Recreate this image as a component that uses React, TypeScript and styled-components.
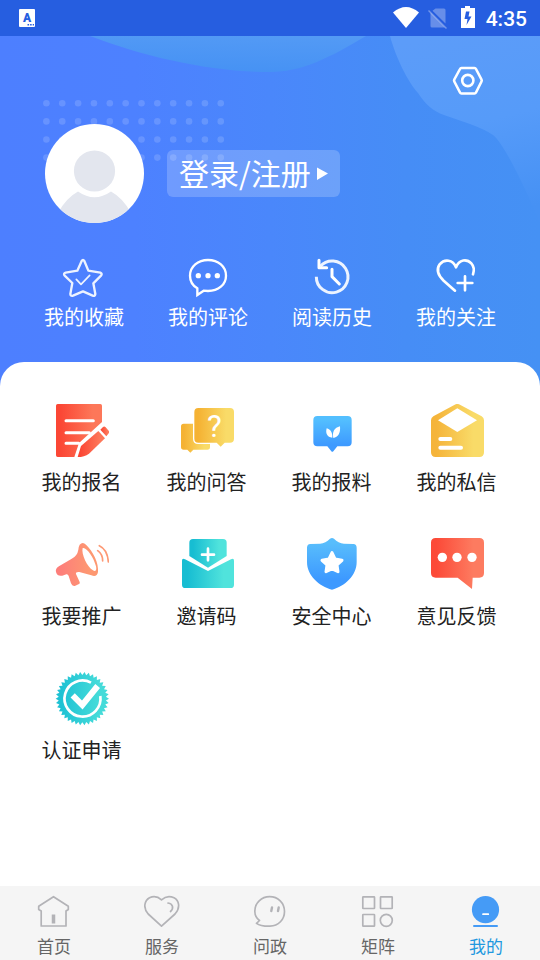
import React from "react";
import styled, { createGlobalStyle } from "styled-components";

const GlobalStyle = createGlobalStyle`
  * { box-sizing: border-box; }
  body {
    margin: 0;
    background: #fff;
    font-family: "Noto Sans CJK SC", "Noto Sans", sans-serif;
  }
  button {
    margin: 0;
    padding: 0;
    border: 0;
    background: none;
    color: inherit;
    font: inherit;
    cursor: pointer;
  }
  a { color: inherit; text-decoration: none; }
  svg { display: block; flex: none; }
`;

const Page = styled.div`
  display: flex;
  flex-direction: column;
  min-height: 100vh;
`;

const StatusBar = styled.div`
  display: flex;
  align-items: center;
  height: 36px;
  padding: 0 13px 0 19px;
  background: #265ee0;
  color: #fff;
`;

const StatusIcons = styled.div`
  display: flex;
  align-items: center;
  gap: 9px;
  margin-left: auto;
`;

const Clock = styled.time`
  font: 500 21px/24px Roboto, sans-serif;
  padding-top: 2px;
`;

const Header = styled.header`
  position: relative;
  padding: 28px 22px 57px;
  background: linear-gradient(90deg, #4d7fff 0%, #4d81ff 25%, #4a87fb 50%, #468df6 75%, #4591f4 100%);
  color: #fff;
`;

const Backdrop = styled.svg`
  position: absolute;
  inset: 0;
  width: 100%;
  height: 100%;
`;

const Toolbar = styled.div`
  position: relative;
  display: flex;
  justify-content: flex-end;
  padding-right: 34px;
`;

const Profile = styled.div`
  position: relative;
  display: flex;
  align-items: center;
  gap: 23px;
  margin-top: 28px;
  padding-left: 23px;
`;

const LoginButton = styled.button`
  display: flex;
  align-items: center;
  gap: 6px;
  height: 47px;
  padding: 0 12px;
  border-radius: 6px;
  background: rgba(255, 255, 255, 0.2);
  font-size: 30px;
  line-height: 44px;
`;

const LoginText = styled.span`
  padding-bottom: 3px;
`;

const QuickList = styled.nav`
  position: relative;
  display: grid;
  grid-template-columns: repeat(4, 1fr);
  margin-top: 35px;
`;

const QuickLink = styled.a`
  display: flex;
  flex-direction: column;
  align-items: center;
  gap: 7px;
  font-size: 20px;
  line-height: 24px;
`;

const Sheet = styled.main`
  position: relative;
  flex: 1;
  margin-top: -24px;
  padding: 42px 21px 42px 19px;
  border-radius: 24px 24px 0 0;
  background: #fff;
`;

const ServiceGrid = styled.div`
  display: grid;
  grid-template-columns: repeat(4, 1fr);
  row-gap: 44px;
`;

const ServiceLink = styled.a`
  display: flex;
  flex-direction: column;
  align-items: center;
  gap: 12px;
  color: #222;
  font-size: 20px;
  line-height: 24px;
`;

const TabBar = styled.nav`
  display: grid;
  grid-template-columns: repeat(5, 1fr);
  height: 74px;
  padding-top: 8px;
  background: #f5f5f5;
`;

const Tab = styled.a<{ $active?: boolean }>`
  display: flex;
  flex-direction: column;
  align-items: center;
  gap: 6px;
  color: ${(p) => (p.$active ? "#2298df" : "#666")};
  font-size: 17px;
  line-height: 20px;
`;

const LineIcon = styled.svg`
  overflow: visible;
  fill: none;
  stroke: #fff;
  stroke-width: 7;
  stroke-linecap: round;
  stroke-linejoin: round;
`;

const TabIcon = styled.svg`
  fill: none;
  stroke: #b3b3b7;
  stroke-width: 1.7;
  stroke-linecap: round;
  stroke-linejoin: round;
`;

function HeaderBackdrop() {
  const dots = [];
  for (let row = 0; row < 4; row++) {
    for (let col = 0; col < 12; col++) {
      dots.push(<circle key={`${row}-${col}`} cx={46.4 + col * 15.85} cy={67.3 + row * 18.1} r="3.3" />);
    }
  }
  return (
    <Backdrop viewBox="0 0 540 350" preserveAspectRatio="xMidYMin slice" aria-hidden="true">
      <defs>
        <linearGradient id="wave" x1="0.55" y1="1" x2="0.75" y2="0">
          <stop offset="0" stopColor="#4692f4" />
          <stop offset="1" stopColor="#539af5" />
        </linearGradient>
        <linearGradient id="cloud" x1="0.3" y1="0" x2="0.5" y2="1">
          <stop offset="0" stopColor="#5c9cf9" />
          <stop offset="0.5" stopColor="#569bf9" />
          <stop offset="1" stopColor="#4691f4" />
        </linearGradient>
      </defs>
      <path d="M90 0C145 21 210 36 270 36C302 36 331 21 366 0Z" fill="url(#wave)" />
      <path d="M390 0C396 22 408 46 418 57C426 69 433 75 444 79L470 88Q486 94 493 99C503 107 517 137 524 151Q533 170 540 187V0Z" fill="url(#cloud)" />
      <g fill="#fff" fillOpacity="0.15">{dots}</g>
    </Backdrop>
  );
}

const quickItems = [
  {
    label: "我的收藏",
    icon: (
      <LineIcon width="40" height="40" viewBox="192 54 120 120" strokeOpacity="0.9">
        <path d="M245 63Q249 57 253 63L265 92L301 98Q308 101 303 107L280 130L286 162Q285 170 278 167L249 154L219 167Q211 169 211 162L217 129L194 107Q189 100 197 98L232 92Z" />
        <path d="M229 118L243 133L269 106" strokeWidth="5" />
      </LineIcon>
    ),
  },
  {
    label: "我的评论",
    icon: (
      <LineIcon width="40" height="40" viewBox="564 54 120 120">
        <path d="M592 165V145C577 136 570 122 570 107C570 80 594 60 624 60C655 60 678 80 678 107C678 134 655 153 624 153L611 152Z" strokeLinejoin="miter" />
        <g fill="#fff" stroke="none">
          <circle cx="595" cy="107" r="8" />
          <circle cx="624" cy="107" r="8" />
          <circle cx="652" cy="107" r="8" />
        </g>
      </LineIcon>
    ),
  },
  {
    label: "阅读历史",
    icon: (
      <LineIcon width="40" height="40" viewBox="126 54 120 120">
        <g strokeWidth="9">
          <path d="M139 110A47.500 47.500 0 1 0 151 79" strokeOpacity="0.9" strokeLinecap="butt" />
          <path d="M147 61V83H170M186 88V110L208 132" />
        </g>
      </LineIcon>
    ),
  },
  {
    label: "我的关注",
    icon: (
      <LineIcon width="40" height="40" viewBox="498 54 120 120">
        <g strokeWidth="8">
          <path d="M555 152L521 122C503 105 499 88 509 73C523 56 549 58 558 82C567 57 591 56 604 70C612 79 613 91 609 103" />
          <path d="M585 109V151M563 129H607" />
        </g>
      </LineIcon>
    ),
  },
];

function ServiceIcon({
  origin,
  id,
  from,
  to,
  vertical,
  children,
}: {
  origin: string;
  id: string;
  from: string;
  to: string;
  vertical?: boolean;
  children: React.ReactNode;
}) {
  return (
    <svg width="54" height="54" viewBox={`${origin} 162 162`} fill={`url(#${id})`} aria-hidden="true">
      <defs>
        <linearGradient id={id} x1="0" y1="0" x2={vertical ? "0" : "1"} y2={vertical ? "1" : "0"}>
          <stop offset="0.1" stopColor={from} />
          <stop offset="0.8" stopColor={to} />
        </linearGradient>
      </defs>
      {children}
    </svg>
  );
}

const badgeTeeth = Array.from({ length: 76 }, (_, i) => {
  const angle = (i * Math.PI) / 38;
  const radius = i % 2 ? 71 : 80;
  return `${247 + radius * Math.cos(angle)},${116 + radius * Math.sin(angle)}`;
}).join(" ");

const services = [
  {
    label: "我的报名",
    icon: (
      <ServiceIcon origin="165 42" id="form" from="#fb4735" to="#fd7759">
        <path d="M168 47Q168 42 173 42H301Q306 42 306 47V96L237 159L223 201H173Q168 201 168 196Z" />
        <path d="M198 92H280M198 128H268M198 160H236" stroke="#fff" strokeWidth="9" strokeLinecap="round" />
        <path d="M295 123L243 168L233 201Q253 201 267 191L315 145Z" />
        <path d="M301 119L309 111Q313 108 317 112L326 122Q329 127 325 131L319 139Z" />
      </ServiceIcon>
    ),
  },
  {
    label: "我的问答",
    icon: (
      <ServiceIcon origin="540 42" id="answer" from="#f5b233" to="#f9db68">
        <path d="M551 101H622Q630 101 630 109V171Q630 179 622 179H580L571 188L562 179H551Q543 179 543 171V109Q543 101 551 101Z" />
        <path d="M595 54H690Q702 54 702 66V146Q702 158 690 158H674L662 170L650 158H595Q583 158 583 146V66Q583 54 595 54Z" stroke="#fff" strokeWidth="8" paintOrder="stroke" />
        <text x="643" y="142" fill="#fff" fontFamily="Roboto, sans-serif" fontSize="94" textAnchor="middle">?</text>
      </ServiceIcon>
    ),
  },
  {
    label: "我的报料",
    icon: (
      <ServiceIcon origin="105 42" id="report" from="#53bfff" to="#3e9aff" vertical>
        <path d="M142 78H233Q245 78 245 90V157Q245 169 233 169H202L190 184Q187 187 184 184L172 169H142Q130 169 130 157V90Q130 78 142 78Z" />
        <path d="M187 143C171 142 166 129 170 115C182 118 188 128 187 143ZM190 144C186 126 193 113 210 109C212 130 204 142 190 144Z" fill="#fff" />
      </ServiceIcon>
    ),
  },
  {
    label: "我的私信",
    icon: (
      <ServiceIcon origin="480 42" id="letter" from="#f5b43a" to="#f9db68">
        <path d="M483 91Q483 83 490 79L557 43Q562 40 567 43L635 79Q642 83 642 91V187Q642 201 628 201H497Q483 201 483 187Z" />
        <path d="M562 55L621 91L562 126L504 91Z" fill="#fff" />
        <path d="M511 147H541M511 173H573" stroke="#fff" strokeWidth="12" strokeLinecap="round" />
      </ServiceIcon>
    ),
  },
  {
    label: "我要推广",
    icon: (
      <ServiceIcon origin="165 54" id="promote" from="#fd7e7a" to="#fd9871">
        <path fillRule="evenodd" d="M178 138Q165 145 168 156Q172 170 187 167L199 163Q204 162 206 168L213 190Q217 200 226 197L237 192Q241 190 239 186L228 162Q226 155 238 156L274 166Q291 172 294 156C297 130 279 93 258 74Q248 64 239 74Q236 79 235 89Q232 108 214 117ZM248 84C259 80 281 111 288 139C291 150 286 157 279 151C262 141 243 102 248 84Z" />
        <path d="M298 77Q323 89 325 126M293 92Q308 102 308 123" fill="none" stroke="#fd9975" strokeWidth="5" strokeLinecap="round" />
      </ServiceIcon>
    ),
  },
  {
    label: "邀请码",
    icon: (
      <ServiceIcon origin="540 54" id="invite" from="#17bdd2" to="#50e3dc">
        <path d="M568 68Q568 57 579 57H669Q680 57 680 68V108L624 143L568 108Z" />
        <path d="M546 122Q546 113 555 118L624 153L693 118Q702 113 702 122V194Q702 204 692 204H556Q546 204 546 194Z" />
        <path d="M624 86V121M606 104H642" stroke="#fff" strokeWidth="8" strokeLinecap="round" />
      </ServiceIcon>
    ),
  },
  {
    label: "安全中心",
    icon: (
      <ServiceIcon origin="105 54" id="shield" from="#58bdfc" to="#3d99ff" vertical>
        <path d="M180 56Q186 52 192 56Q205 69 222 71L250 72Q260 73 260 83V126C260 166 225 199 186 209C147 199 111 166 111 126V83Q111 73 121 72L150 71Q167 69 180 56Z" />
        <path d="M186 98L195 117L216 121L201 135L204 155L186 147L168 155L171 135L156 121L177 117Z" fill="#fff" stroke="#fff" strokeWidth="9" strokeLinejoin="round" />
      </ServiceIcon>
    ),
  },
  {
    label: "意见反馈",
    icon: (
      <ServiceIcon origin="480 54" id="feedback" from="#fc4a38" to="#fd7b60">
        <path d="M497 54H628Q642 54 642 68V159Q642 173 628 173H608L606 207L563 173H497Q483 173 483 159V68Q483 54 497 54Z" />
        <g fill="#fff">
          <circle cx="517" cy="112" r="14" />
          <circle cx="561" cy="112" r="14" />
          <circle cx="606" cy="112" r="14" />
        </g>
      </ServiceIcon>
    ),
  },
  {
    label: "认证申请",
    icon: (
      <ServiceIcon origin="165 36" id="badge" from="#1fc2d4" to="#45dbd9">
        <polygon points={badgeTeeth} />
        <path d="M301 108A54 54 0 1 1 273 68" fill="none" stroke="#fff" strokeWidth="8" />
        <path d="M218 106L247 135L293 78" fill="none" stroke="#fff" strokeWidth="18" />
      </ServiceIcon>
    ),
  },
];

const tabs = [
  {
    label: "首页",
    icon: (
      <TabIcon width="36" height="36" viewBox="0 0 36 36">
        <path d="M17.500 2.700L32.300 12.300V15.500L30 17V32H5.200V17L2.700 15.500V12.300Z" />
        <path d="M17.500 20.500V29.500" strokeWidth="3.500" strokeLinecap="butt" />
      </TabIcon>
    ),
  },
  {
    label: "服务",
    icon: (
      <TabIcon width="36" height="36" viewBox="0 0 36 36">
        <path d="M17.500 32.200L4.200 20C-1.500 13.500 .8 6.500 5.500 3.800C9.500 1.800 14 2.600 17.500 5.800C21 2.600 26 1.800 30 3.800C35 6.500 36.800 13.500 31 20Z" />
        <path d="M24 9C29 9.500 30 14.500 26.500 17.500" />
      </TabIcon>
    ),
  },
  {
    label: "问政",
    icon: (
      <TabIcon width="36" height="36" viewBox="0 0 36 36">
        <path d="M7.500 26.500L4.500 29.300C8 32 13 32.300 18 32.200C26.500 32 32.500 25.500 32.500 17.500C32.500 9 26 2.700 17.700 2.700C9.500 2.700 2.800 9 2.800 17.200C2.800 21 4.500 24.300 7.500 26.500Z" />
        <path d="M20 13.500L19.300 17M26.700 13.500L26 17" strokeWidth="2.400" />
      </TabIcon>
    ),
  },
  {
    label: "矩阵",
    icon: (
      <TabIcon width="36" height="36" viewBox="0 0 36 36">
        <rect x="2.800" y="2.800" width="11.700" height="11.700" rx="0.500" />
        <rect x="20.500" y="2.800" width="11.700" height="11.700" rx="0.500" />
        <rect x="2.800" y="20.500" width="11.700" height="11.700" rx="0.500" />
        <circle cx="26.300" cy="26.300" r="6" />
      </TabIcon>
    ),
  },
  {
    label: "我的",
    active: true,
    icon: (
      <TabIcon width="36" height="36" viewBox="0 0 36 36">
        <circle cx="17.500" cy="15.700" r="13.600" fill="#459bf6" stroke="none" />
        <path d="M15 20.200H20.300" stroke="#fff" />
        <path d="M6 32H29" stroke="#459bf6" strokeWidth="2" />
      </TabIcon>
    ),
  },
];

export default function App() {
  return (
    <Page>
      <GlobalStyle />
      <StatusBar>
        <svg width="16" height="18" viewBox="0 0 16 18" aria-hidden="true">
          <rect width="16" height="18" rx="1" fill="#fff" />
          <text x="8" y="13" textAnchor="middle" fill="#265ee0" fontFamily="Roboto, sans-serif" fontWeight="900" fontSize="12">A</text>
          <path d="M8.500 15.800H15" stroke="#265ee0" strokeWidth="1.400" strokeDasharray="1.600 1" />
        </svg>
        <StatusIcons>
          <svg width="26" height="24" viewBox="0 0 26 24" aria-hidden="true">
            <path d="M0 6.500Q13-4.500 26 6.500L13 22Z" fill="#fff" />
          </svg>
          <svg width="20" height="24" viewBox="0 0 20 24" aria-hidden="true">
            <path d="M7.500 2.500H16Q17.500 2.500 17.500 4V17.500L4.500 4.700ZM2.500 6.500L17 21.500H4Q2.500 21.500 2.500 20Z" fill="#fff" fillOpacity="0.3" />
            <path d="M.5 4.500L18.500 22.500" stroke="#fff" strokeOpacity="0.35" strokeWidth="1.500" />
          </svg>
          <svg width="20" height="24" viewBox="0 0 20 24" aria-hidden="true">
            <path d="M4 2H8V0H13V2H18V22H4Z" fill="#fff" />
            <path d="M12.500 5.500H9L7.500 13H10.500L9.500 19L14.500 10.500H11.500Z" fill="#265ee0" />
          </svg>
          <Clock>4:35</Clock>
        </StatusIcons>
      </StatusBar>

      <Header>
        <HeaderBackdrop />
        <Toolbar>
          <button type="button" aria-label="设置">
            <svg width="32" height="32" viewBox="0 0 32 32" fill="none" stroke="#fff" strokeWidth="2.600" strokeLinejoin="round" aria-hidden="true">
              <path d="M9.500 4H22.500Q23.500 4 24 5L29.500 15.500Q30 16.500 29.500 17.500L24 28.500Q23.500 29.500 22.500 29.500H9.500Q8.500 29.500 8 28.500L2.300 17.500Q1.800 16.500 2.300 15.500L8 5Q8.500 4 9.500 4Z" />
              <circle cx="15.800" cy="16.500" r="5.600" />
            </svg>
          </button>
        </Toolbar>
        <Profile>
          <svg width="99" height="99" viewBox="0 0 99 99" role="img" aria-label="头像">
            <defs>
              <clipPath id="face"><circle cx="49.500" cy="49.500" r="49.500" /></clipPath>
            </defs>
            <circle cx="49.500" cy="49.500" r="49.500" fill="#fff" />
            <g fill="#e3e6ee" clipPath="url(#face)">
              <circle cx="49.500" cy="47" r="20.600" />
              <path d="M33 67.500Q49.500 79 66 67.500Q78 74 86 89V99H13V89Q21 74 33 67.500Z" />
            </g>
          </svg>
          <LoginButton type="button">
            <LoginText>登录/注册</LoginText>
            <svg width="11" height="14" viewBox="0 0 11 14" aria-hidden="true">
              <path d="M0 .5L11 6.500L0 13Z" fill="#fff" />
            </svg>
          </LoginButton>
        </Profile>
        <QuickList>
          {quickItems.map((item) => (
            <QuickLink key={item.label} href="#">
              {item.icon}
              {item.label}
            </QuickLink>
          ))}
        </QuickList>
      </Header>

      <Sheet>
        <ServiceGrid>
          {services.map((service) => (
            <ServiceLink key={service.label} href="#">
              {service.icon}
              {service.label}
            </ServiceLink>
          ))}
        </ServiceGrid>
      </Sheet>

      <TabBar>
        {tabs.map((tab) => (
          <Tab key={tab.label} href="#" $active={tab.active} aria-current={tab.active ? "page" : undefined}>
            {tab.icon}
            {tab.label}
          </Tab>
        ))}
      </TabBar>
    </Page>
  );
}
